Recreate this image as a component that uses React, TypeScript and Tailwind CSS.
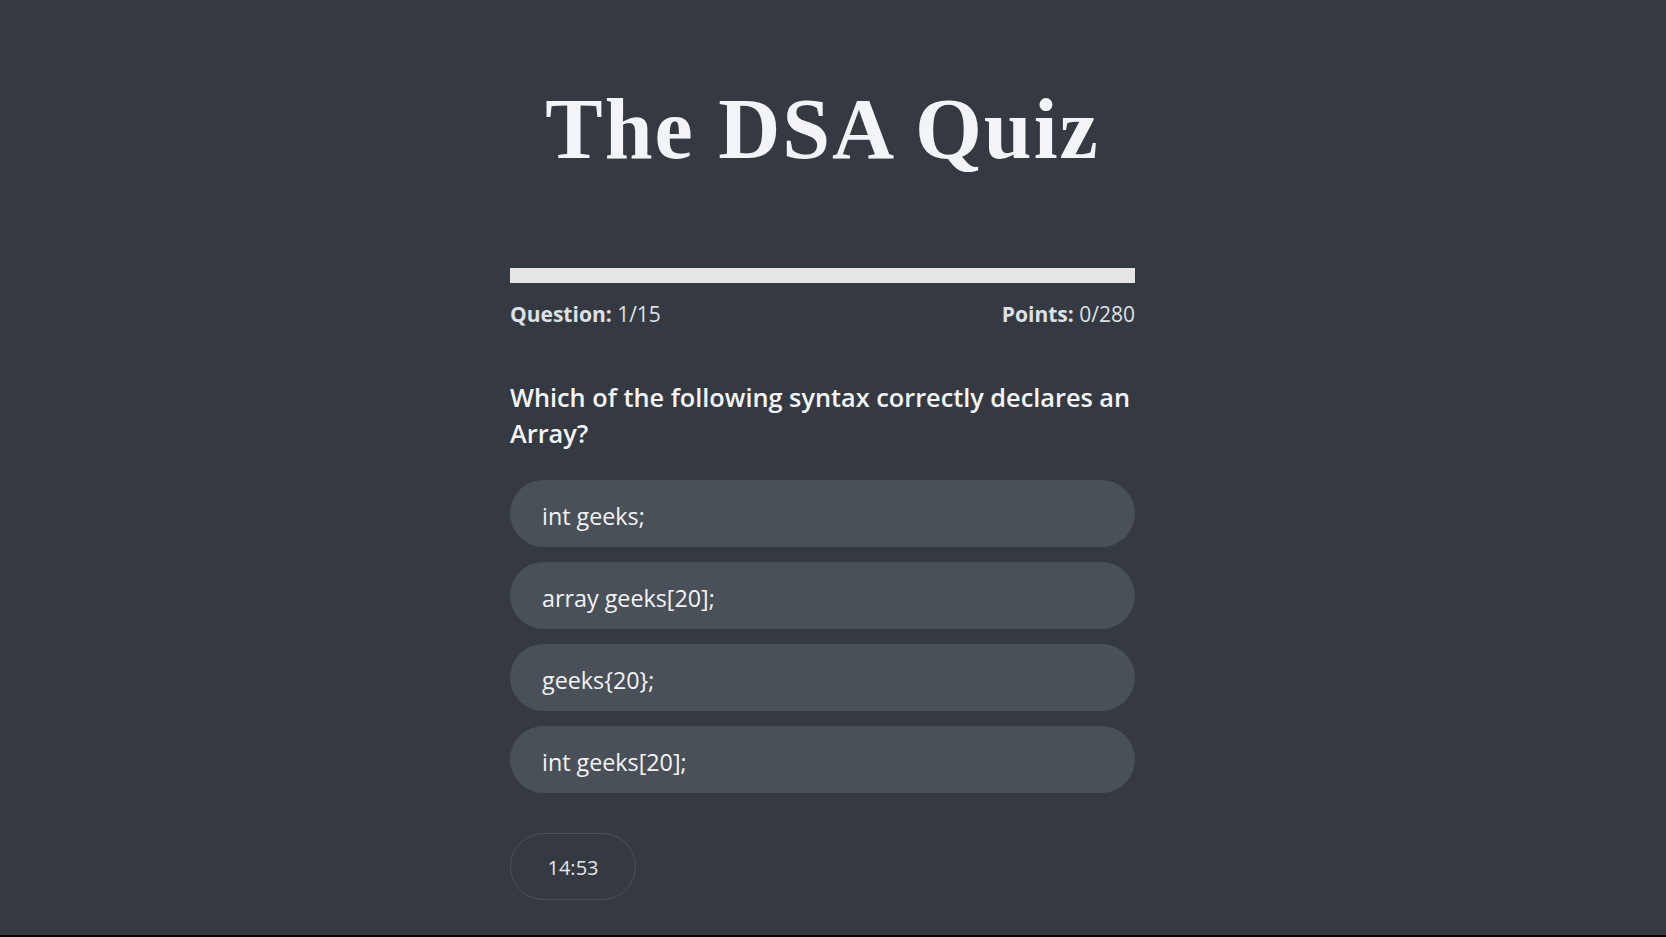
import React from "react";

const options = ["int geeks;", "array geeks[20];", "geeks{20};", "int geeks[20];"];

export default function App() {
  return (
    <div className="h-[937px] bg-black overflow-hidden">
      <div
        className="h-[935px] bg-[#353a42] flex justify-center pr-[21px]"
        style={{ fontFamily: '"Open Sans", "Noto Sans", sans-serif' }}
      >
        <div className="w-[625px] flex flex-col">
          <h1
            className="mt-[86px] h-[86px] text-center text-[86px] leading-[86px] font-bold tracking-[2px] text-[#f2f4f7]"
            style={{ fontFamily: '"Liberation Serif", "Times New Roman", serif' }}
          >
            The DSA Quiz
          </h1>
          <div className="mt-[96px] h-[15px] w-full bg-[#e5e5e5]" />
          <div className="mt-[17px] flex justify-between text-[21px] leading-[28px] text-[#dde1e6]">
            <span>
              <span className="font-bold">Question:</span> 1/15
            </span>
            <span>
              <span className="font-bold">Points:</span> 0/280
            </span>
          </div>
          <p className="mt-[51px] text-[25.3px] leading-[36px] font-semibold text-[#f3f5f8]">
            Which of the following syntax correctly declares an Array?
          </p>
          <div className="mt-[29px] flex flex-col gap-[15px]">
            {options.map((o) => (
              <button
                key={o}
                className="h-[67px] w-full rounded-full bg-[#4a5058] pl-[32px] pt-[5px] text-left text-[23.3px] text-[#f1f3f6] flex items-center"
              >
                {o}
              </button>
            ))}
          </div>
          <div className="mt-[40px] h-[67px] w-[126px] rounded-full border border-[#4e535b] pt-[3px] flex items-center justify-center text-[20px] text-[#e3e6ea]">
            14:53
          </div>
        </div>
      </div>
    </div>
  );
}
